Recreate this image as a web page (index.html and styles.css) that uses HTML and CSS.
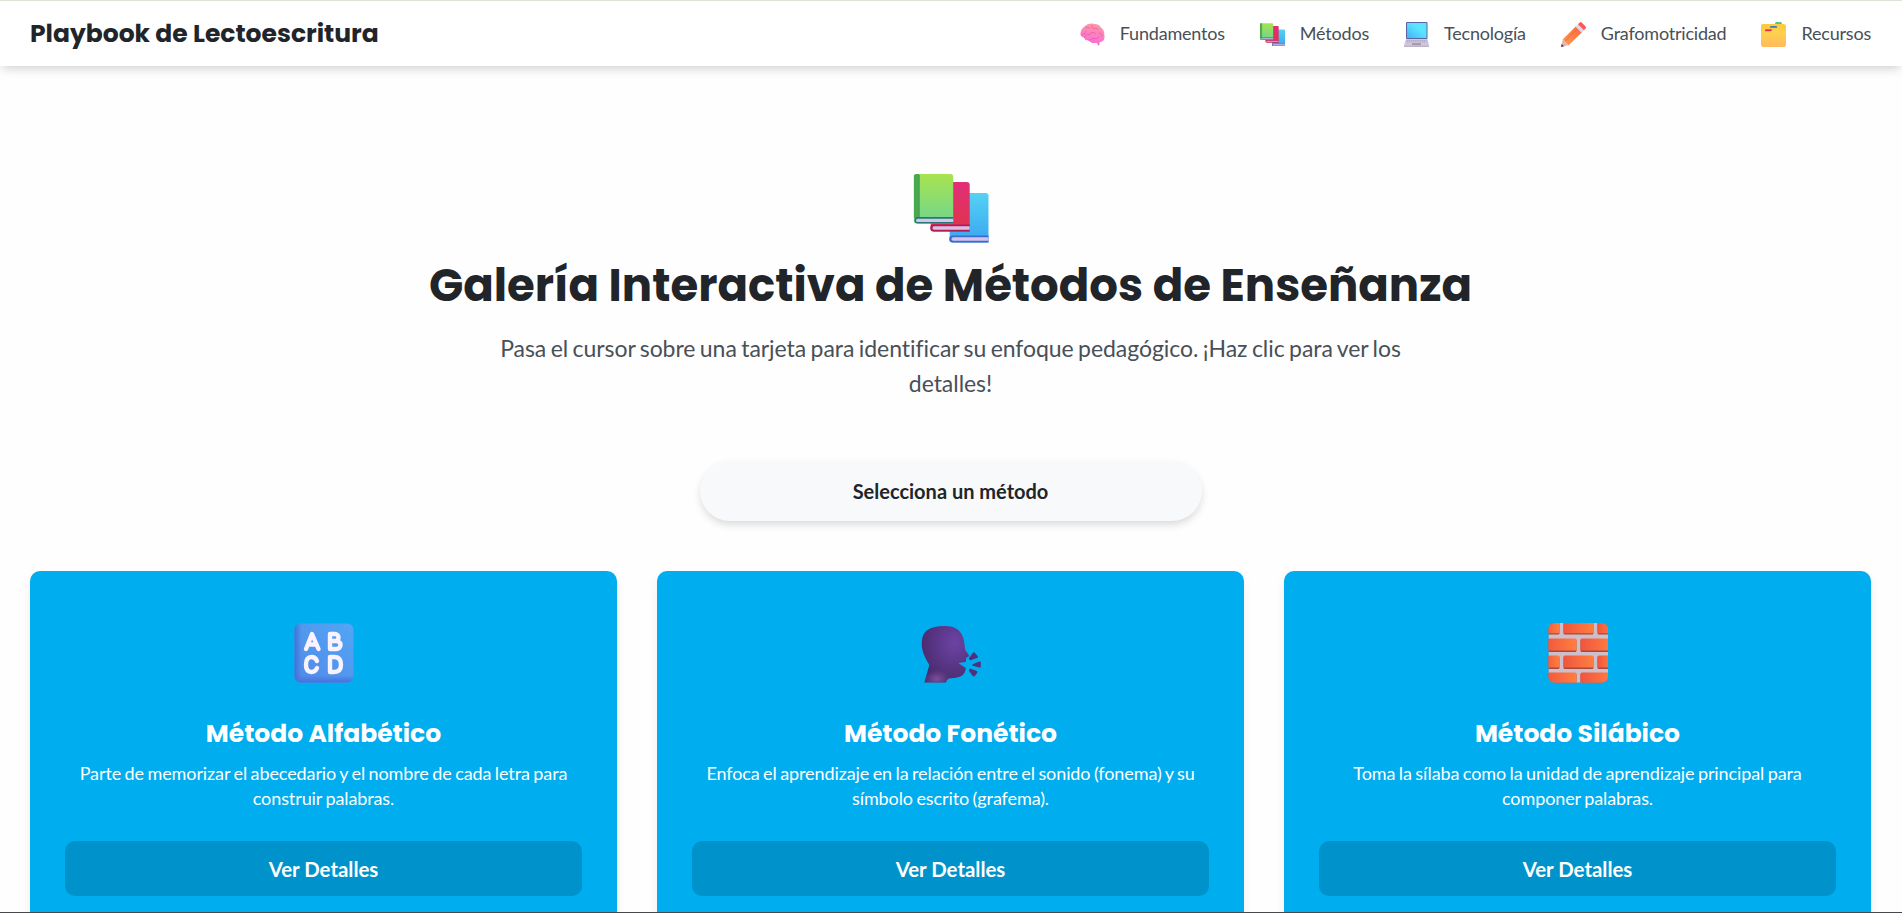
FILE: index.html
```html
<!DOCTYPE html>
<html lang="es">
<head>
<meta charset="utf-8">
<title>Playbook de Lectoescritura</title>
<link rel="stylesheet" href="styles.css">
</head>
<body>
<svg class="defs" width="0" height="0" aria-hidden="true">
  <defs>
    <linearGradient id="gGreen" x1="0" y1="0" x2="0" y2="1"><stop offset="0" stop-color="#a8e34f"/><stop offset="1" stop-color="#70d68e"/></linearGradient>
    <linearGradient id="gRed" x1="0" y1="0" x2="0" y2="1"><stop offset="0" stop-color="#e02f78"/><stop offset="1" stop-color="#e1334a"/></linearGradient>
    <linearGradient id="gBlue" x1="0" y1="0" x2="0" y2="1"><stop offset="0" stop-color="#54d2f4"/><stop offset="1" stop-color="#3aa5f0"/></linearGradient>
    <linearGradient id="gBrain" x1=".6" y1="0" x2=".4" y2="1"><stop offset="0" stop-color="#ff97a4"/><stop offset="1" stop-color="#fc68dc"/></linearGradient>
    <linearGradient id="gScreen" x1="0" y1="1" x2="1" y2="0"><stop offset="0" stop-color="#3fb2f6"/><stop offset=".6" stop-color="#5be4ff"/></linearGradient>
    <linearGradient id="gFolder" x1="0" y1="0" x2="0" y2="1"><stop offset="0" stop-color="#ffd44c"/><stop offset="1" stop-color="#ffba5c"/></linearGradient>
    <linearGradient id="gPencil" x1="0" y1="1" x2="1" y2="0"><stop offset="0" stop-color="#ff9b4e"/><stop offset="1" stop-color="#f9663f"/></linearGradient>
    <linearGradient id="gAbc" x1="1" y1="0" x2="0" y2="1"><stop offset="0" stop-color="#52a6f5"/><stop offset="1" stop-color="#5189e8"/></linearGradient>
    <linearGradient id="gAbcLeft" x1="0" y1="0" x2="1" y2="0"><stop offset="0" stop-color="#3f73d6"/><stop offset=".12" stop-color="#3f73d6" stop-opacity="0"/></linearGradient>
    <linearGradient id="gAbcBottom" x1="0" y1="1" x2="0" y2="0"><stop offset="0" stop-color="#4870dd"/><stop offset=".12" stop-color="#4870dd" stop-opacity="0"/></linearGradient>
    <radialGradient id="gHead" cx=".7" cy=".3" r=".75"><stop offset="0" stop-color="#6c43a4"/><stop offset="1" stop-color="#4a2b6d"/></radialGradient>
    <radialGradient id="gNeck" cx=".5" cy=".8" r=".5"><stop offset="0" stop-color="#7a4f9c"/><stop offset="1" stop-color="#7a4f9c" stop-opacity="0"/></radialGradient>
    <linearGradient id="gBrick" x1="0" y1="0" x2="1" y2="0"><stop offset="0" stop-color="#f0553f"/><stop offset="1" stop-color="#ff7f40"/></linearGradient>
    <symbol id="books" viewBox="0 0 75 69">
      <path d="M36 19h36q3 0 3 3v46.500H39q-3 0-3-3z" fill="url(#gBlue)"/>
      <path d="M39 61.500h36v7H39a3.500 3.500 0 0 1 0-7z" fill="#3c6ccb"/>
      <path d="M39.500 63.200H75v3.500H39.500a1.700 1.700 0 0 1 0-3.500z" fill="#d5c2ec"/>
      <path d="M17 8h36q3 0 3 3v46.500H20q-3 0-3-3z" fill="url(#gRed)"/>
      <path d="M20 50.500h36v7H20a3.500 3.500 0 0 1 0-7z" fill="#b01d56"/>
      <path d="M20.500 52.200H56v3.500H20.500a1.700 1.700 0 0 1 0-3.500z" fill="#dcbfe6"/>
      <path d="M3 0h34q2.500 0 2.500 3v46.500H3q-3 0-3-3V3q0-3 3-3z" fill="url(#gGreen)"/>
      <path d="M3 0h2.500v44H0V3q0-3 3-3z" fill="#49a94f"/><path d="M5.500 1v43" stroke="#3f9f55" stroke-width="1"/>
      <path d="M3.500 43h36v6.500h-36a3.300 3.300 0 0 1 0-6.500z" fill="#277a73"/>
      <path d="M4 44.700h35.500v3.400H4a1.700 1.700 0 0 1 0-3.400z" fill="#d4c6ea"/>
    </symbol>
  </defs>
</svg>

<header class="topbar">
  <div class="brand">Playbook de Lectoescritura</div>
  <nav class="nav">
    <a class="nav-item">
      <svg class="nav-icon" viewBox="0 0 25 25">
        <path d="M.6 13C-.2 9 2.500 6 4.500 4.600 7 1.800 11 1 14 1.900c3.500-.2 6 1.600 7 3.600 2.500 1.800 3.400 4.500 3.300 7.500.7 3-.2 5.300-2.300 6.300-.8.800-2 1-2.500 1.200v2.300c0 1-1.500 1-1.800.1l-.7-2.200c-3 .8-6.500.5-8.500-2.400-2.500.2-4-.5-4.400-2.800C2.200 15.500 1 14.500.6 13z" fill="url(#gBrain)"/>
        <path d="M2 12.500c2-.5 3.500-1 4-3M6 6c1-1 3-1 4 .5M4.500 15.500c1-3 3-3.500 5-3 1-2 4-3 6-1M12 3.500c-1 1.500 0 3 2 3s3-.5 4 1M8.500 18.300c2-.3 4-2.200 6.500-1.800 2 .3 3 0 4-1.500M19 11c1.500 0 3 1 3 3" fill="none" stroke="#d94fa5" stroke-width=".9" stroke-linecap="round" opacity=".65"/>
      </svg>
      <span>Fundamentos</span>
    </a>
    <a class="nav-item">
      <svg class="nav-icon" viewBox="0 -1 25 25"><use href="#books" width="25" height="23.500"/></svg>
      <span>Métodos</span>
    </a>
    <a class="nav-item">
      <svg class="nav-icon" viewBox="0 0 25 25">
        <rect x="2" y="0" width="21.500" height="17" rx="1" fill="#5a63a8"/>
        <rect x="3" y="1" width="19.500" height="15" fill="url(#gScreen)"/>
        <path d="M2 17h21.500L25 23v1q0 1-1 1H1q-1 0-1-1v-1z" fill="#cfc8dc"/>
        <path d="M3 18.500h19.500M2.700 20h20" stroke="#a79fb6" stroke-width=".8" stroke-dasharray="1.300 .6"/>
        <rect x="8" y="21.200" width="9" height="2" fill="#a098ae"/><path d="M0 24.300h25" stroke="#b0a7bf" stroke-width=".8"/>
      </svg>
      <span>Tecnología</span>
    </a>
    <a class="nav-item">
      <svg class="nav-icon" viewBox="0 0 25 25">
        <path d="M0 25l1.800-7.700 5.800 5.900z" fill="#e5b5ad"/><path d="M0 25l.7-3 2.300 2.300z" fill="#463061"/>
        <path d="M1.800 17.300 15 4.200l6 6L7.600 23.200z" fill="url(#gPencil)"/>
        <path d="M3.800 19.300 17.200 6.200" stroke="#e6632f" stroke-width=".9" opacity=".7"/>
        <path d="m14.500 4.700 2.800-2.800 6 6-2.800 2.800z" fill="#ddd4ef"/>
        <path d="m17 2.200 1.700-1.700q1-.9 2 0l3.900 3.900q.8 1 0 2L23 8.200z" fill="#fa5a50"/>
      </svg>
      <span>Grafomotricidad</span>
    </a>
    <a class="nav-item">
      <svg class="nav-icon" viewBox="0 0 25 25">
        <rect x="14" y="0" width="7" height="5" rx="1.500" fill="#4fc780"/>
        <path d="M0 4q0-2 2-2h20.500q2.500 0 2.500 2.500V20H0z" fill="#fcca42"/>
        <rect x="9" y="4" width="7" height="3" rx="1" fill="#367dba"/>
        <path d="M0 7q0-1.300 2-1.300h21q2 0 2 1.300v5H0z" fill="#ffcb45"/>
        <rect x="4" y="7.300" width="7" height="3" rx="1" fill="#f22d5c"/>
        <path d="M0 8q.5 1.200 2 1.200h7q1.500 0 2-.9h12q2 0 2 1.500v13q0 2.200-2.200 2.200H2.200Q0 25 0 22.800z" fill="url(#gFolder)"/>
      </svg>
      <span>Recursos</span>
    </a>
  </nav>
</header>

<main class="page">
  <section class="hero">
    <svg class="hero-icon" viewBox="-.7 0 75 69"><use href="#books" width="75" height="69"/></svg>
    <h1 class="hero-title">Galería Interactiva de Métodos de Enseñanza</h1>
    <p class="hero-text">Pasa el cursor sobre una tarjeta para identificar su enfoque pedagógico. ¡Haz clic para ver los detalles!</p>
    <div class="status">Selecciona un método</div>
  </section>

  <section class="cards">
    <article class="card">
      <svg class="card-icon" viewBox="0 0 60 60">
        <rect x=".5" y=".5" width="59" height="59" rx="6" fill="url(#gAbc)"/>
        <rect x=".5" y=".5" width="59" height="59" rx="6" fill="url(#gAbcLeft)"/>
        <rect x=".5" y=".5" width="59" height="59" rx="6" fill="url(#gAbcBottom)"/>
        <g fill="none" stroke="#fbf2ff" stroke-width="4.400" stroke-linecap="round" stroke-linejoin="round">
          <path d="M12 26 18 11 24.500 26M14.500 21.500h8"/>
          <path d="M36 11v15h6.500a4 4 0 0 0 0-8H36h5a3.500 3.500 0 0 0 0-7z"/>
          <path d="M23 38q-1.500-4-5.500-4-5.500 0-5.500 7.500t5.500 7.500q4 0 5.500-4"/>
          <path d="M36 34v15h4q7 0 7-7.500T40 34z"/>
        </g>
      </svg>
      <h2 class="card-title">Método Alfabético</h2>
      <p class="card-text">Parte de memorizar el abecedario y el nombre de cada letra para construir palabras.</p>
      <button class="card-button">Ver Detalles</button>
    </article>
    <article class="card">
      <svg class="card-icon" viewBox=".7 0 60 60">
        <path d="M4 59.500 9 42C5 35 1 28 1.500 19 2 7 10 3.500 24 3q15-.5 19 12c1.300 4.500 1.200 8 2 12l3.500 5q.5 2-2.500 2.500l-.5 4.500-7.500 1 7.500 5c-.5 6-4 9-10 9.700l-7 .8q-2 1-3 4z" fill="url(#gHead)"/>
        <path d="M4 59.500 9 42h20v13.500q-2 1-3 4z" fill="url(#gNeck)"/>
        <path d="m49 34.500 3.500-4.500q1-1.300 2-.3l3 3.500q.8 1.300-.7 1.800l-6.300 2.200q-2.500-.2-1.500-2.700zM52 41.500l7-3q1.500-.2 1.500 1v4q0 1.500-1.700 1l-6.800-2zM49.500 45.500l6.500 2.200q2 .8.800 2.200l-2.500 3.300q-1 1-2-.4L49 48.300q-.8-2.200.5-2.800z" fill="#51317f"/>
      </svg>
      <h2 class="card-title">Método Fonético</h2>
      <p class="card-text">Enfoca el aprendizaje en la relación entre el sonido (fonema) y su símbolo escrito (grafema).</p>
      <button class="card-button">Ver Detalles</button>
    </article>
    <article class="card">
      <svg class="card-icon" viewBox="-.5 0 60 60">
        <clipPath id="wall"><rect width="59.500" height="59.500" rx="6"/></clipPath>
        <g clip-path="url(#wall)">
          <rect width="60" height="60" fill="#cdbec9"/>
          <g fill="#a6483d">
            <rect x="-4" y="-4" width="15" height="15.500" rx="1.500"/><rect x="15" y="-4" width="30" height="15.500" rx="1.500"/><rect x="49" y="-4" width="15" height="15.500" rx="1.500"/>
            <rect x="-4" y="16" width="32" height="13" rx="1.500"/><rect x="32" y="16" width="32" height="13" rx="1.500"/>
            <rect x="-4" y="33" width="15" height="13" rx="1.500"/><rect x="15" y="33" width="30" height="13" rx="1.500"/><rect x="49" y="33" width="15" height="13" rx="1.500"/>
            <rect x="-4" y="50" width="32" height="13" rx="1.500"/><rect x="32" y="50" width="32" height="13" rx="1.500"/>
          </g>
          <g fill="url(#gBrick)">
            <rect x="-4" y="-4" width="15" height="14.300" rx="1.500"/><rect x="15" y="-4" width="30" height="14.300" rx="1.500"/><rect x="49" y="-4" width="15" height="14.300" rx="1.500"/>
            <rect x="-4" y="15.500" width="32" height="12" rx="1.500"/><rect x="32" y="15.500" width="32" height="12" rx="1.500"/>
            <rect x="-4" y="32.500" width="15" height="12" rx="1.500"/><rect x="15" y="32.500" width="30" height="12" rx="1.500"/><rect x="49" y="32.500" width="15" height="12" rx="1.500"/>
            <rect x="-4" y="49.500" width="32" height="12" rx="1.500"/><rect x="32" y="49.500" width="32" height="12" rx="1.500"/>
          </g>
        </g>
      </svg>
      <h2 class="card-title">Método Silábico</h2>
      <p class="card-text">Toma la sílaba como la unidad de aprendizaje principal para componer palabras.</p>
      <button class="card-button">Ver Detalles</button>
    </article>
  </section>
</main>
</body>
</html>
```
FILE: styles.css
```css
* { box-sizing: border-box; }
body {
  margin: 0;
  height: 913px;
  overflow: hidden;
  background: #fefefe;
  color: #212529;
  font-family: Lato, "Open Sans", sans-serif;
  border-top: 1px solid #dce3d9;
  border-bottom: 1px solid #44484c;
  display: flex;
  flex-direction: column;
}
.defs { position: absolute; }
.topbar {
  flex: none;
  height: 65px;
  padding: 0 31px 0 30px;
  display: flex;
  align-items: center;
  justify-content: space-between;
  background: #fff;
  box-shadow: 0 4px 10px -2px rgba(0, 0, 0, .2);
  position: relative;
}
.brand {
  font: 700 25px/38px Poppins, Inter, sans-serif;
}
.nav { display: flex; gap: 35px; }
.nav-item {
  display: flex;
  align-items: center;
  gap: 15px;
  font-size: 18px;
  letter-spacing: -.2px;
  line-height: 26px;
  color: #495057;
}
.nav-item span { padding-bottom: 2px; }
.nav-icon { width: 25px; height: 25px; flex: none; margin-top: 1px; }
.page { flex: 1; min-height: 0; overflow: hidden; padding: 108px 31px 0 30px; }
.hero { display: flex; flex-direction: column; align-items: center; }
.hero-icon { width: 75px; height: 69px; overflow: visible; }
.hero-title {
  margin: 7px 0 0;
  font: 700 45px/72px Poppins, Inter, sans-serif;
  white-space: nowrap;
}
.hero-text {
  width: 910px;
  margin: 9px 0 0;
  text-align: center;
  font-size: 23px;
  letter-spacing: -.05px;
  word-spacing: -1.400px;
  line-height: 35px;
  color: #495057;
}
.status {
  width: 502px;
  height: 60px;
  margin-top: 60px;
  border-radius: 30px;
  background: #f8f9fa;
  box-shadow: 0 4px 8px -1px rgba(0, 0, 0, .16);
  display: flex;
  align-items: center;
  justify-content: center;
  font-weight: 700;
  font-size: 20px;
}
.cards {
  display: grid;
  grid-template-columns: repeat(3, 1fr);
  gap: 40px;
  margin-top: 50px;
}
.card {
  height: 400px;
  padding: 52px 35px 0;
  border-radius: 10px;
  background: #00adef;
  box-shadow: 0 4px 12px rgba(0, 0, 0, .06);
  color: #fff;
  text-align: center;
  display: flex;
  flex-direction: column;
  align-items: center;
}
.card-icon { width: 60px; height: 60px; flex: none; }
.card-title {
  margin: 33px 0 0;
  font: 700 25px/36px Poppins, Inter, sans-serif;
}
.card-text {
  margin: 9px 0 0;
  font-size: 18px;
  letter-spacing: -.1px;
  word-spacing: -1px;
  line-height: 25px;
}
.card-button {
  width: 100%;
  height: 55px;
  margin-top: 30px;
  border: 0;
  border-radius: 10px;
  background: #0093cb;
  color: #fff;
  font: 700 20.400px/24px Lato, sans-serif;
}
```
